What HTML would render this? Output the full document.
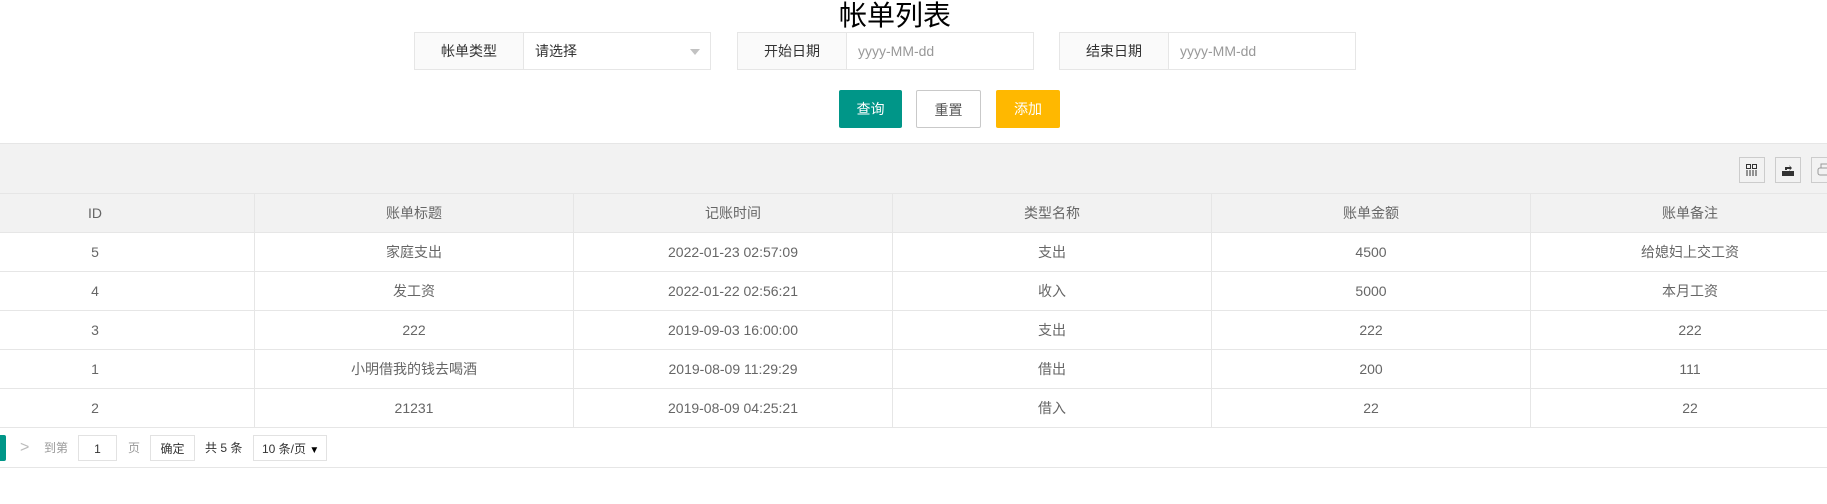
<!DOCTYPE html>
<html><head><meta charset="utf-8"><style>
*{box-sizing:border-box;margin:0;padding:0}
body{width:1827px;height:504px;overflow:hidden;background:#fff;font-family:"Liberation Sans","Noto Sans CJK SC",sans-serif;font-size:14px;color:#666;position:relative}
.abs{position:absolute}
h1{position:absolute;left:0;width:1790px;text-align:center;top:0;font-size:28px;font-weight:normal;color:#000;line-height:32px}
.box{position:absolute;top:32px;height:38px;border:1px solid #e6e6e6;background:#fff;width:297px}
.box .lb{position:absolute;left:0;top:0;bottom:0;width:109px;background:#fafafa;border-right:1px solid #e6e6e6;text-align:center;line-height:36px;color:#333}
.box .v{position:absolute;left:120px;top:0;line-height:36px;color:#999}
.btn{position:absolute;top:90px;height:38px;line-height:38px;text-align:center;color:#fff;font-size:14px;border-radius:2px}
.tool{position:absolute;top:143px;left:0;width:1827px;height:50px;background:#f2f2f2;border-top:1px solid #e6e6e6}
.ic{position:absolute;top:13px;width:26px;height:26px;border:1px solid #ccc;background:#f2f2f2}
table{position:absolute;left:-65px;top:193px;border-collapse:collapse;table-layout:fixed;width:1914px}
td,th{width:319px;height:39px;border:1px solid #e6e6e6;text-align:center;font-weight:normal;color:#666}
th{background:#f2f2f2}
.pg{position:absolute;top:435px;height:26px;line-height:26px;font-size:12px}
</style></head><body>
<h1>帐单列表</h1>
<div class="box" style="left:414px"><div class="lb">帐单类型</div><div class="v" style="color:#333;left:120px">请选择</div><div class="abs" style="right:10px;top:16px;border:5px solid transparent;border-top:6px solid #c2c2c2"></div></div>
<div class="box" style="left:737px"><div class="lb">开始日期</div><div class="v">yyyy-MM-dd</div></div>
<div class="box" style="left:1059px"><div class="lb">结束日期</div><div class="v">yyyy-MM-dd</div></div>
<div class="btn" style="left:839px;width:63px;background:#009688">查询</div>
<div class="btn" style="left:916px;width:65px;background:#fff;border:1px solid #c9c9c9;color:#555">重置</div>
<div class="btn" style="left:996px;width:64px;background:#ffb800">添加</div>
<div class="tool">
<div class="ic" style="left:1739px"><svg width="24" height="24" viewBox="0 0 24 24"><rect x="6.5" y="6.5" width="4" height="4" fill="none" stroke="#333"/><rect x="12.5" y="6.5" width="4" height="4" fill="none" stroke="#333"/><path d="M7 12v6M10 12v6M13 12v6M16 12v6" stroke="#333"/></svg></div>
<div class="ic" style="left:1775px"><svg width="24" height="24" viewBox="0 0 24 24"><path d="M6 13h12v5H6z" fill="#333"/><path d="M9 12v-3h5l-1-2 3 3-3 3 1-2h-3v1" fill="#333"/></svg></div>
<div class="ic" style="left:1811px"><svg width="24" height="24" viewBox="0 0 24 24"><rect x="6" y="10" width="14" height="7" rx="2" fill="none" stroke="#999"/><path d="M9 10V6h8v4" fill="none" stroke="#999"/></svg></div>
</div>
<table>
<tr><th>ID</th><th>账单标题</th><th>记账时间</th><th>类型名称</th><th>账单金额</th><th>账单备注</th></tr>
<tr><td>5</td><td>家庭支出</td><td>2022-01-23 02:57:09</td><td>支出</td><td>4500</td><td>给媳妇上交工资</td></tr>
<tr><td>4</td><td>发工资</td><td>2022-01-22 02:56:21</td><td>收入</td><td>5000</td><td>本月工资</td></tr>
<tr><td>3</td><td>222</td><td>2019-09-03 16:00:00</td><td>支出</td><td>222</td><td>222</td></tr>
<tr><td>1</td><td>小明借我的钱去喝酒</td><td>2019-08-09 11:29:29</td><td>借出</td><td>200</td><td>111</td></tr>
<tr><td>2</td><td>21231</td><td>2019-08-09 04:25:21</td><td>借入</td><td>22</td><td>22</td></tr>
</table>
<div class="abs" style="left:0;top:435px;width:6px;height:26px;background:#009688;border-radius:0 2px 2px 0"></div>
<div class="pg" style="left:20px;color:#bbb;font-size:16px">&gt;</div>
<div class="pg" style="left:44px;color:#999">到第</div>
<div class="pg" style="left:78px;width:39px;border:1px solid #e2e2e2;text-align:center;color:#333">1</div>
<div class="pg" style="left:128px;color:#999">页</div>
<div class="pg" style="left:150px;width:45px;border:1px solid #e2e2e2;text-align:center;color:#333">确定</div>
<div class="pg" style="left:205px;color:#333">共 5 条</div>
<div class="pg" style="left:253px;width:74px;border:1px solid #e2e2e2;color:#333;padding-left:8px">10 条/页 <span style="font-size:10px;color:#000">&#9660;</span></div>
<div class="abs" style="left:0;top:467px;width:1827px;border-top:1px solid #e6e6e6"></div>
</body></html>
